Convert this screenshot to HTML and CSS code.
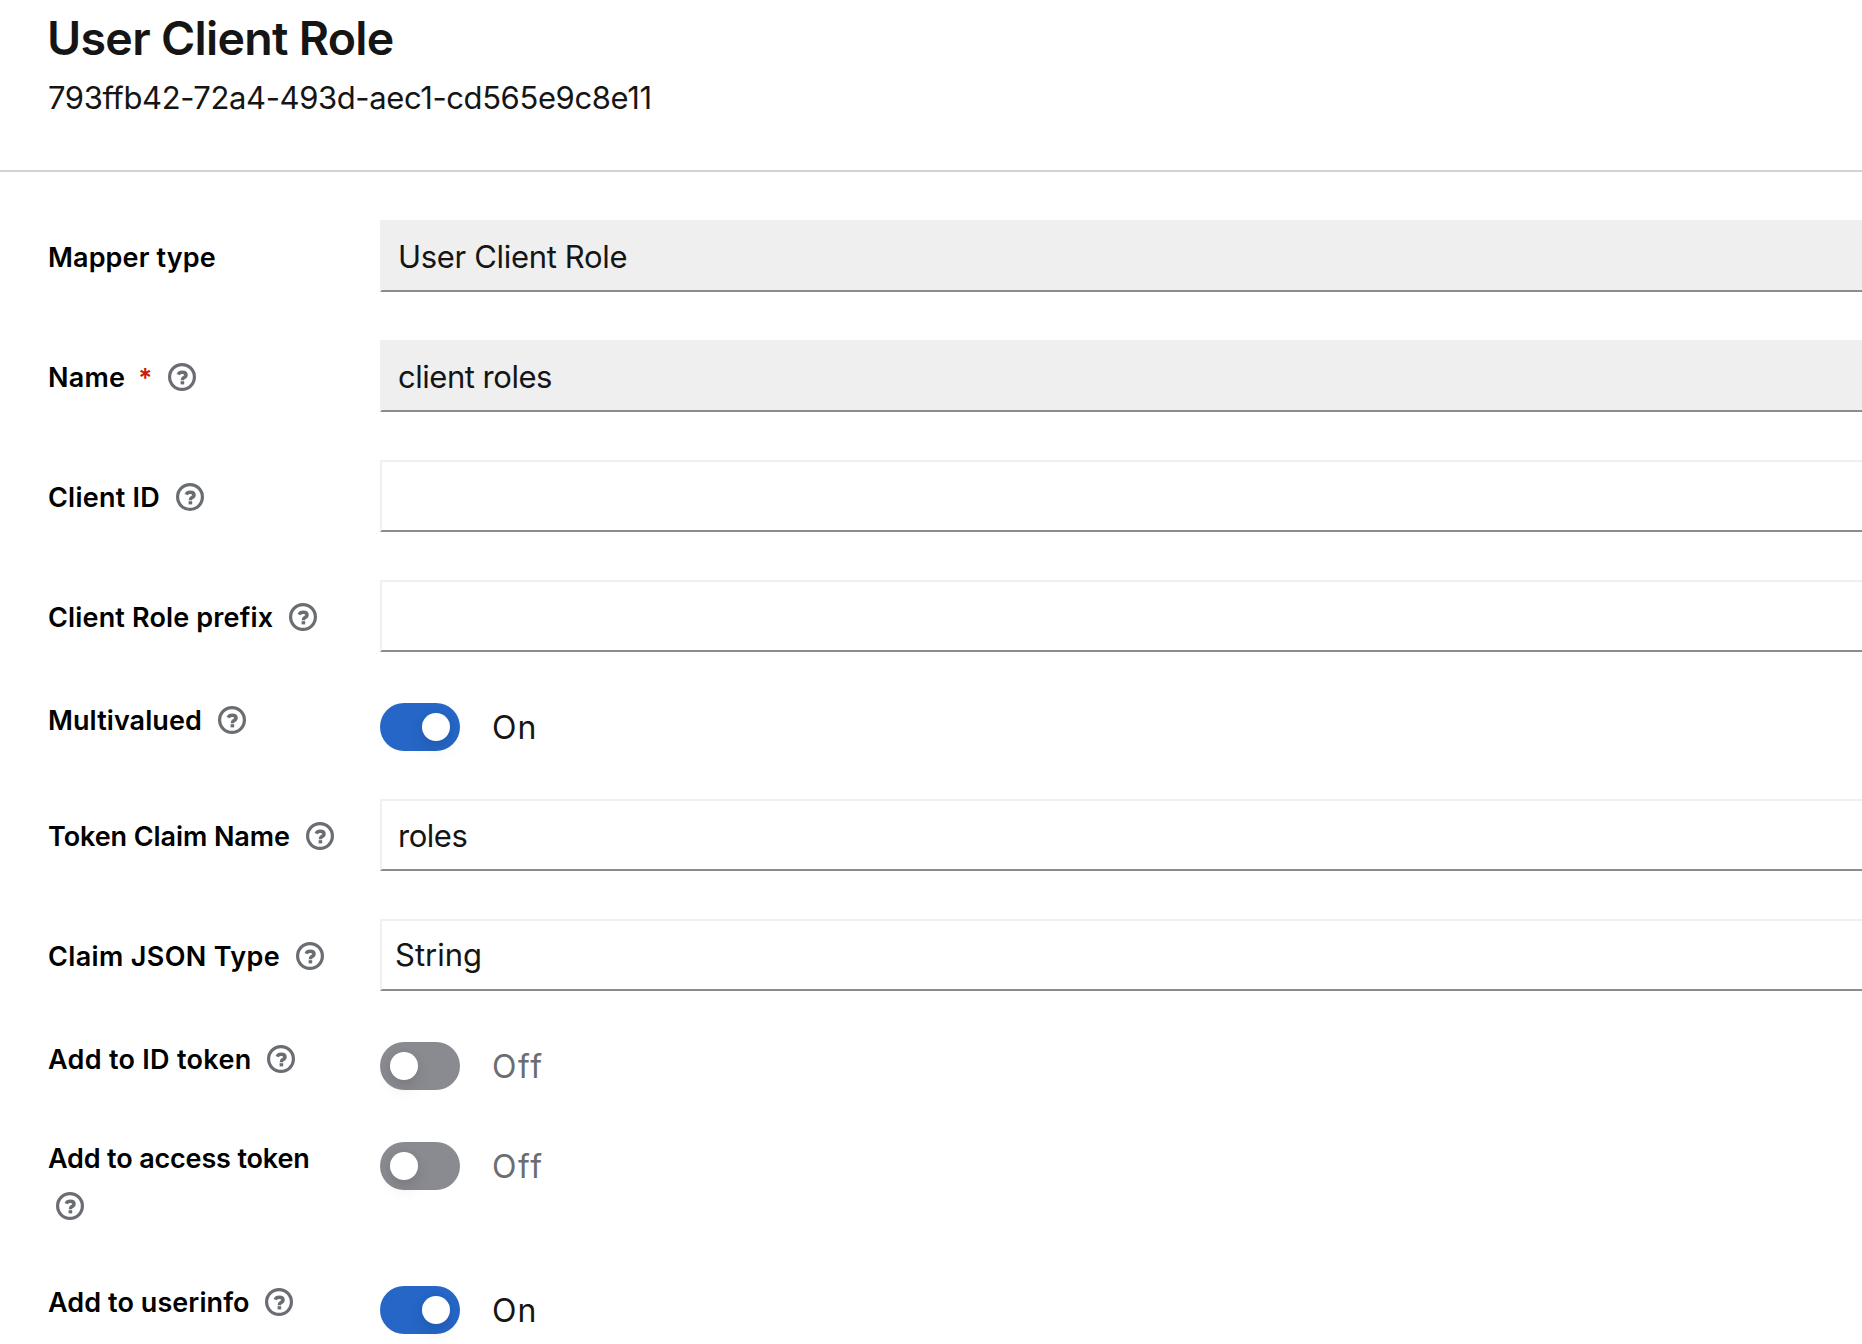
FILE: index.html
```html
<!DOCTYPE html>
<html lang="en">
<head>
<meta charset="utf-8">
<title>User Client Role</title>
<link rel="stylesheet" href="styles.css">
</head>
<body>
<svg class="sprite" aria-hidden="true">
  <symbol id="help" viewBox="0 0 28 28">
    <circle cx="14" cy="14" r="12.4" fill="none" stroke="currentColor" stroke-width="3.2"/>
    <path d="M10.2 11.700C10.900 10 12.200 9.300 14.100 9.300C16.400 9.300 18 10.300 18 12C18 13.500 16.900 14.100 15.800 14.600C14.800 15.100 14.400 15.600 14.400 17.200" fill="none" stroke="currentColor" stroke-width="3.500"/>
    <rect x="12.600" y="18.200" width="3.600" height="3.200" fill="currentColor"/>
  </symbol>
</svg>

<header class="page-header">
  <h1 class="title">User Client Role</h1>
  <p class="subtitle">793ffb42-72a4-493d-aec1-cd565e9c8e11</p>
</header>

<main class="form">
  <div class="row">
    <label class="label"><span class="ls-12">Mapper type</span></label>
    <div class="field readonly"><span class="ls-n33">User Client Role</span></div>
  </div>
  <div class="row">
    <label class="label"><span class="ls-23">Name</span><span class="required">*</span> <svg class="help"><use href="#help"/></svg></label>
    <div class="field readonly"><span class="ls-n48">client roles</span></div>
  </div>
  <div class="row">
    <label class="label"><span class="ls-23">Client ID</span> <svg class="help"><use href="#help"/></svg></label>
    <div class="field"></div>
  </div>
  <div class="row">
    <label class="label"><span class="ls-16">Client Role prefix</span> <svg class="help"><use href="#help"/></svg></label>
    <div class="field"></div>
  </div>
  <div class="row switch-row">
    <label class="label low"><span class="ls-8">Multivalued</span> <svg class="help"><use href="#help"/></svg></label>
    <div class="control"><span class="switch on"><span class="knob"></span></span><span class="state ls-on">On</span></div>
  </div>
  <div class="row">
    <label class="label"><span class="ls-n8">Token Claim Name</span> <svg class="help"><use href="#help"/></svg></label>
    <div class="field"><span class="ls-n48">roles</span></div>
  </div>
  <div class="row">
    <label class="label"><span class="ls-36">Claim JSON Type</span> <svg class="help"><use href="#help"/></svg></label>
    <div class="field select">String</div>
  </div>
  <div class="row switch-row tall">
    <label class="label low"><span class="ls-30">Add to ID token</span> <svg class="help"><use href="#help"/></svg></label>
    <div class="control"><span class="switch"><span class="knob"></span></span><span class="state off">Off</span></div>
  </div>
  <div class="row switch-row">
    <label class="label wrapped"><span class="ls-n16">Add to access token</span> <svg class="help"><use href="#help"/></svg></label>
    <div class="control"><span class="switch"><span class="knob"></span></span><span class="state off">Off</span></div>
  </div>
  <div class="row switch-row">
    <label class="label"><span class="ls-8">Add to userinfo</span> <svg class="help"><use href="#help"/></svg></label>
    <div class="control"><span class="switch on"><span class="knob"></span></span><span class="state ls-on">On</span></div>
  </div>
</main>
</body>
</html>
```
FILE: styles.css
```css
* { box-sizing: border-box; }

body {
  margin: 0;
  height: 1344px;
  overflow: hidden;
  background: #fff;
  color: #151515;
  font-family: Inter, "Liberation Sans", sans-serif;
  font-size: 31px;
}

.sprite { display: none; }

.page-header {
  height: 172px;
  padding: 8px 47px 0;
  border-bottom: 2px solid #d2d2d2;
}
.title {
  margin: 0;
  font-size: 46.5px;
  font-weight: 560;
  line-height: 60px;
  letter-spacing: -0.7px;
}
.subtitle {
  margin: 6px 0 0 1px;
  line-height: 48px;
  letter-spacing: -0.39px;
}

.form {
  display: flex;
  flex-direction: column;
  gap: 48px;
  padding: 48px 0 0 48px;
}
.row {
  display: grid;
  grid-template-columns: 300px 1fr;
  column-gap: 32px;
  align-items: start;
}
.label {
  padding-top: 18px;
  color: #000;
  font-size: 27px;
  font-weight: 600;
  line-height: 40px;
}
.switch-row { min-height: 51px; }
.switch-row.tall { min-height: 52px; }
.switch-row .label { padding-top: 0; }
.switch-row .label.low { padding-top: 1px; }

.help {
  width: 28px;
  height: 28px;
  margin-left: 9px;
  vertical-align: -4px;
  color: #6a6e73;
}
.wrapped { height: 96px; }
.wrapped .help {
  margin-top: 13px;
  margin-left: 8px;
}

.required {
  display: inline-block;
  width: 14px;
  margin-left: 13px;
  color: #c9190b;
  font-size: 26px;
  line-height: 30px;
  text-align: center;
}

.field {
  height: 72px;
  padding-left: 16px;
  border: 2px solid #f0f0f0;
  border-right: 0;
  border-bottom-color: #8a8d90;
  line-height: 70px;
}
.field.readonly { background: #efefef; }
.field.select {
  padding-left: 13px;
  line-height: 68px;
}

.control {
  display: flex;
  align-items: center;
  gap: 32px;
  padding-top: 3px;
}
.switch {
  display: flex;
  width: 80px;
  height: 48px;
  padding: 10px;
  border-radius: 24px;
  background: #8a8b90;
}
.switch.on {
  justify-content: flex-end;
  background: #2566c6;
}
.knob {
  width: 28px;
  height: 28px;
  border-radius: 50%;
  background: #fff;
  box-shadow: 0 8px 16px rgba(3, 3, 3, .1), 0 0 8px rgba(3, 3, 3, .04);
}
.state { line-height: 50px; height: 48px; font-size: 32px; }
.off { color: #6a6e73; letter-spacing: 1.6px; }
.ls-on { letter-spacing: 1px; }

/* Optical tracking */
.ls-8 { letter-spacing: .08px; }
.ls-12 { letter-spacing: .12px; }
.ls-16 { letter-spacing: .16px; }
.ls-23 { letter-spacing: .23px; }
.ls-30 { letter-spacing: .3px; }
.ls-36 { letter-spacing: .36px; }
.ls-n8 { letter-spacing: -.08px; }
.ls-n16 { letter-spacing: -.16px; }
.ls-n33 { letter-spacing: -.33px; }
.ls-n48 { letter-spacing: -.48px; }
```
